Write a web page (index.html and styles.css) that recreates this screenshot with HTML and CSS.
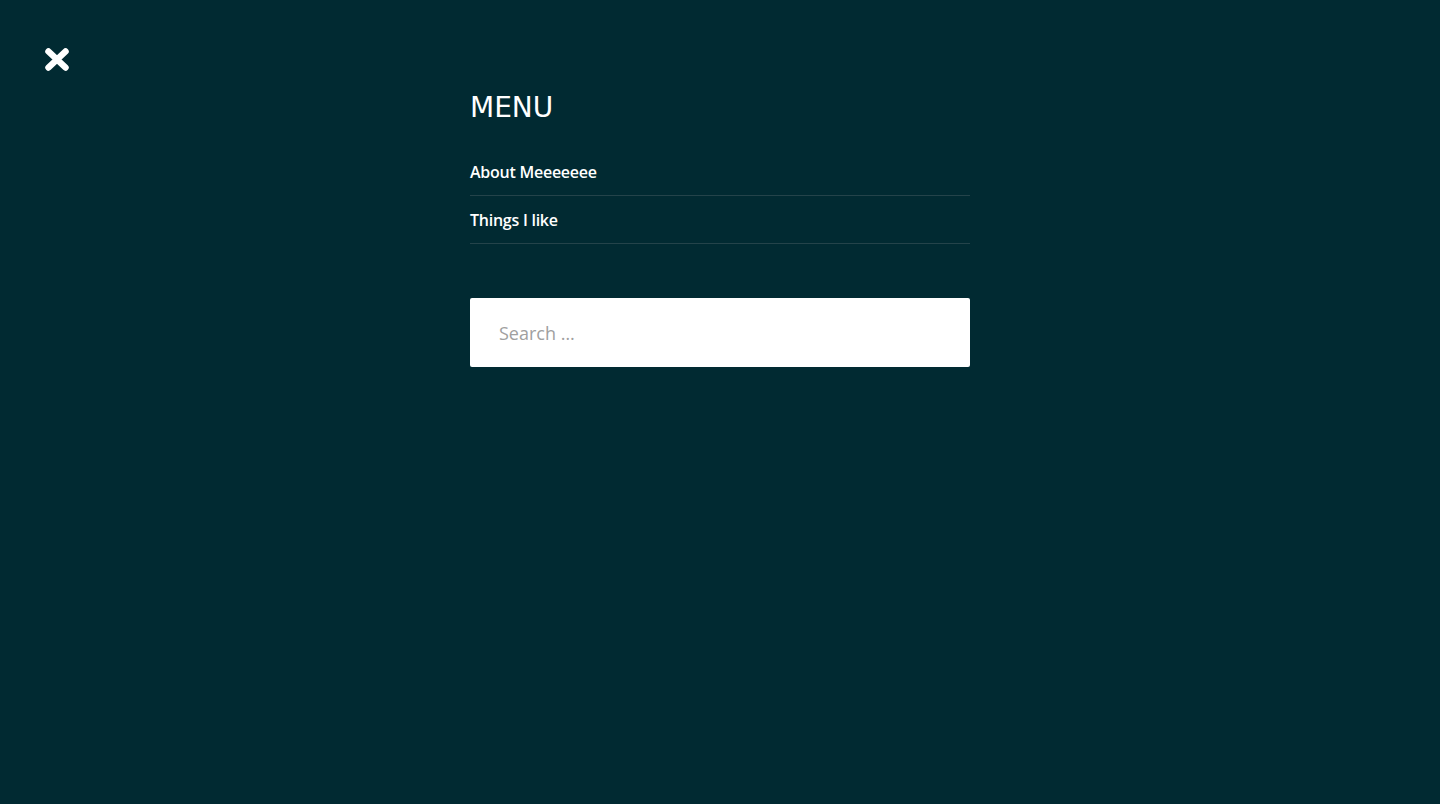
FILE: index.html
```html
<!DOCTYPE html>
<html lang="en">
<head>
<meta charset="utf-8">
<title>Menu</title>
<link rel="stylesheet" href="styles.css">
</head>
<body>
<div class="overlay">
  <button class="close" aria-label="Close">
    <svg width="26" height="25" viewBox="0 0 26 25"><path d="M4.5 4.5 L21.5 20.5 M21.5 4.5 L4.5 20.5" stroke="#fff" stroke-width="6.5" stroke-linecap="round"/></svg>
  </button>
  <div class="panel">
    <h2 class="title">MENU</h2>
    <ul class="menu">
      <li><a href="#">About Meeeeeee</a></li>
      <li><a href="#">Things I like</a></li>
    </ul>
    <form class="search">
      <input type="search" placeholder="Search …">
    </form>
  </div>
</div>
</body>
</html>
```
FILE: styles.css
```css
html, body {
  margin: 0;
  padding: 0;
  height: 100%;
  background: #012a32;
}
.overlay {
  position: relative;
  min-height: 804px;
  font-family: "Open Sans", sans-serif;
  color: #fff;
}
.close {
  position: absolute;
  left: 44px;
  top: 47px;
  padding: 0;
  border: 0;
  background: none;
  cursor: pointer;
  line-height: 0;
}
.panel {
  width: 500px;
  margin: 0 auto;
  padding-top: 89px;
}
.title {
  margin: 2px 0 24px;
  font-family: "DejaVu Sans", Verdana, sans-serif;
  font-weight: normal;
  font-size: 28px;
  line-height: 33px;
  letter-spacing: 0;
}
.menu {
  list-style: none;
  margin: 0;
  padding: 0;
}
.menu li {
  border-bottom: 1px solid #24434a;
}
.menu a {
  display: block;
  padding: 12px 0 11px;
  font-size: 16px;
  line-height: 24px;
  font-weight: 600;
  color: #fff;
  text-decoration: none;
  letter-spacing: -0.25px;
}
.search {
  margin-top: 54px;
}
.search input {
  box-sizing: border-box;
  width: 500px;
  height: 69px;
  border: 0;
  border-radius: 2px;
  padding: 0 29px;
  font-family: "Open Sans", sans-serif;
  font-size: 18px;
  color: #333;
  background: #fff;
  outline: none;
}
.search input::placeholder {
  color: #a0a0a0;
}
```
